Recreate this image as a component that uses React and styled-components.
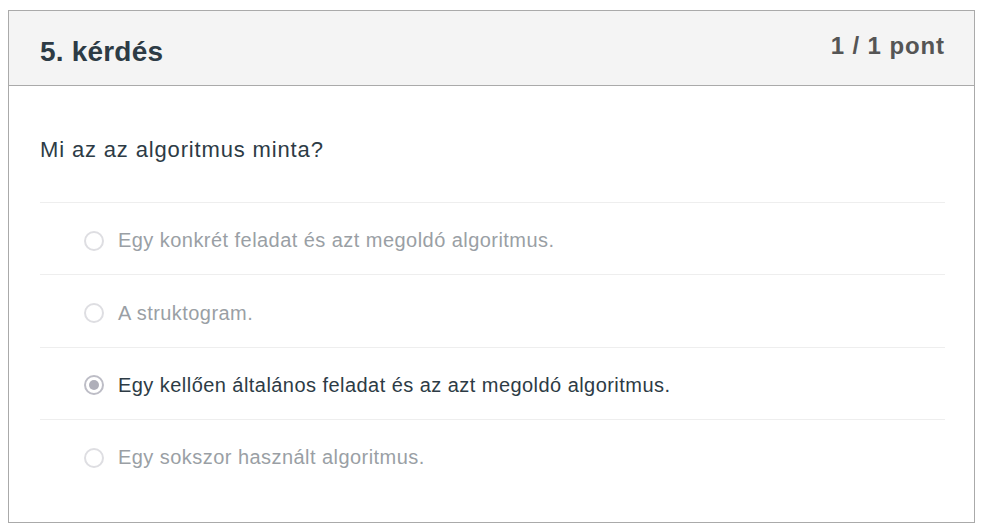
import React from "react";
import styled, { createGlobalStyle } from "styled-components";

const GlobalStyle = createGlobalStyle`
  body {
    margin: 8px;
    background: #fff;
    font-family: "Liberation Sans", Arial, sans-serif;
  }
`;

const answers = [
  { text: "Egy konkrét feladat és azt megoldó algoritmus.", selected: false },
  { text: "A struktogram.", selected: false },
  { text: "Egy kellően általános feladat és az azt megoldó algoritmus.", selected: true },
  { text: "Egy sokszor használt algoritmus.", selected: false },
];

const App = () => {
  return (
    <>
      <GlobalStyle />
      <Card>
        <Header>
          <Title>5. kérdés</Title>
          <Points>1 / 1 pont</Points>
        </Header>
        <Body>
          <Question>Mi az az algoritmus minta?</Question>
          <AnswerList>
            {answers.map((a, i) => (
              <Answer key={i}>
                <Radio selected={a.selected} />
                <AnswerText selected={a.selected}>{a.text}</AnswerText>
              </Answer>
            ))}
          </AnswerList>
        </Body>
      </Card>
    </>
  );
};

const Card = styled.div`
  margin-top: 2px;
  width: 967px;
  border: 1px solid #aaa;
  box-sizing: border-box;
`;

const Header = styled.div`
  display: flex;
  justify-content: space-between;
  align-items: flex-start;
  background: #f4f4f4;
  border-bottom: 1px solid #aaa;
  height: 75px;
  box-sizing: border-box;
  padding: 0 29px 0 31px;
`;

const Title = styled.h2`
  margin: 0;
  padding-top: 25px;
  font-size: 28px;
  font-weight: bold;
  color: #2d3b45;
  letter-spacing: 0.2px;
`;

const Points = styled.div`
  padding-top: 21px;
  font-size: 24px;
  font-weight: bold;
  color: #555;
  letter-spacing: 0.9px;
`;

const Body = styled.div`
  padding: 50px 29px 30px 31px;
`;

const Question = styled.p`
  margin: 0 0 38px;
  font-size: 22px;
  line-height: 28px;
  color: #2d3b45;
  letter-spacing: 0.85px;
`;

const AnswerList = styled.div`
  display: flex;
  flex-direction: column;
`;

const Answer = styled.div`
  display: flex;
  align-items: center;
  height: 72.4px;
  border-top: 1px solid #eee;
  padding: 4px 0 0 44px;
  box-sizing: border-box;
`;

const Radio = styled.span`
  width: 16px;
  height: 16px;
  border-radius: 50%;
  border: 2px solid ${(p) => (p.selected ? "#bdbdc6" : "#dedee2")};
  background: #fff;
  margin-right: 14px;
  flex-shrink: 0;
  position: relative;
  &::after {
    content: "";
    display: ${(p) => (p.selected ? "block" : "none")};
    position: absolute;
    left: 3px;
    top: 3px;
    width: 10px;
    height: 10px;
    border-radius: 50%;
    background: #afafb9;
  }
`;

const AnswerText = styled.span`
  font-size: 20px;
  color: ${(p) => (p.selected ? "#2d3b45" : "#9a9fa5")};
  letter-spacing: 0.45px;
`;

export default App;
